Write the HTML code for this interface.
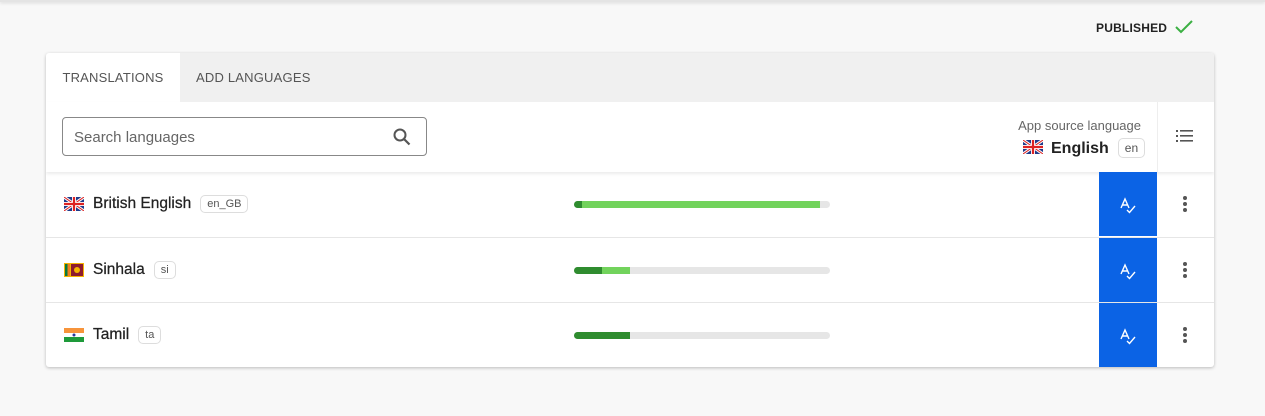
<!DOCTYPE html>
<html><head><style>
*{box-sizing:border-box;margin:0;padding:0}
body{width:1265px;height:416px;background:#f8f8f8;font-family:"Liberation Sans",Arial,sans-serif;position:relative;overflow:hidden;color:#222}
.top{position:absolute;left:0;top:0;width:1265px;height:2px;background:#e4e4e4;box-shadow:0 1px 3px rgba(0,0,0,.15)}
.pub{position:absolute;left:1096px;top:19px;font-size:12px;font-weight:bold;color:#222;letter-spacing:.2px}
.card{position:absolute;left:46px;top:53px;width:1168px;height:314px;background:#fff;box-shadow:0 1px 3px rgba(0,0,0,.25);border-radius:3px;overflow:hidden}
.tabs{height:49px;background:#f0f0f0;position:relative}
.tab{position:absolute;top:0;height:49px;line-height:49px;font-size:13px;color:#555;letter-spacing:.2px}
.tb{position:absolute;top:49px;left:0;width:1168px;height:70px;box-shadow:0 2px 3px rgba(0,0,0,.08);background:#fff}
.search{position:absolute;left:16px;top:15px;width:365px;height:39px;border:1px solid #888;border-radius:4px;font-size:15px;color:#666;padding:11px 11px}
.row{position:absolute;left:0;width:1168px;height:65px;border-top:1px solid #e6e6e6}
.name{position:absolute;left:47px;top:23px;font-size:15.5px;color:#222;-webkit-text-stroke:.25px #222}
.code{display:inline-block;border:1px solid #ddd;border-radius:5px;font-size:11px;color:#555;padding:2px 6px;margin-left:9px;vertical-align:1px;-webkit-text-stroke:0}
.flag{position:absolute;left:18px;top:25px;width:20px;height:14px}
.bar{position:absolute;left:528px;top:29px;width:256px;height:7px;border-radius:4px;background:#e6e6e6;overflow:hidden}
.blue{position:absolute;left:1053px;top:0;width:58px;height:64px;background:#0b63e5}
.dots{position:absolute;left:1137px;top:24px;width:4px}
.dots i{display:block;width:4px;height:4px;border-radius:2px;background:#555;margin-bottom:2px}
</style></head><body>
<div class="top"></div>
<div class="pub">PUBLISHED <svg width="20" height="16" viewBox="0 0 20 16" style="vertical-align:-3px;margin-left:3px"><path d="M2 8l5 5L18 2" fill="none" stroke="#3cb043" stroke-width="2"/></svg></div>
<div class="card">
 <div class="tabs">
  <div class="tab" style="left:0;width:134px;background:#fff;text-align:center;border-radius:3px 0 0 0">TRANSLATIONS</div>
  <div class="tab" style="left:150px">ADD LANGUAGES</div>
 </div>
 <div class="tb">
  <div class="search">Search languages
   <svg style="position:absolute;right:14px;top:9px" width="20" height="20" viewBox="0 0 20 20"><circle cx="8" cy="8" r="5.5" fill="none" stroke="#555" stroke-width="2"/><path d="M12 12l5.5 5.5" stroke="#555" stroke-width="2.2"/></svg>
  </div>
  <div style="position:absolute;right:73px;top:16px;font-size:13px;color:#666">App source language</div>
  <div style="position:absolute;left:977px;top:36px;font-size:16px;font-weight:bold">
   <svg width="20" height="14" viewBox="0 0 20 14" style="vertical-align:-1px;margin-right:8px"><rect width="20" height="14" fill="#1f3a8a"/><path d="M0 0L20 14M20 0L0 14" stroke="#fff" stroke-width="3"/><path d="M0 0L20 14M20 0L0 14" stroke="#d22" stroke-width="1"/><path d="M10 0v14M0 7h20" stroke="#fff" stroke-width="4"/><path d="M10 0v14M0 7h20" stroke="#d22" stroke-width="2.2"/></svg>English<span class="code" style="font-weight:normal;font-size:12px">en</span>
  </div>
  <div style="position:absolute;left:1111px;top:0;width:1px;height:70px;background:#eee"></div>
  <svg style="position:absolute;left:1130px;top:27px" width="18" height="14" viewBox="0 0 18 14"><g fill="#555"><rect x="0" y="1" width="2" height="2"/><rect x="0" y="6" width="2" height="2"/><rect x="0" y="11" width="2" height="2"/><rect x="4" y="1" width="13" height="1.6"/><rect x="4" y="6" width="13" height="1.6"/><rect x="4" y="11" width="13" height="1.6"/></g></svg>
 </div>
 <div class="row" style="top:119px;border-top:none">
  <svg class="flag" viewBox="0 0 20 14"><rect width="20" height="14" fill="#1f3a8a"/><path d="M0 0L20 14M20 0L0 14" stroke="#fff" stroke-width="3"/><path d="M0 0L20 14M20 0L0 14" stroke="#d22" stroke-width="1"/><path d="M10 0v14M0 7h20" stroke="#fff" stroke-width="4"/><path d="M10 0v14M0 7h20" stroke="#d22" stroke-width="2.2"/></svg>
  <div class="name">British English<span class="code">en_GB</span></div>
  <div class="bar"><div style="position:absolute;left:0;width:8px;height:7px;background:#2f8c2f"></div><div style="position:absolute;left:8px;width:238px;height:7px;background:#72d35c"></div></div>
  <div class="blue"><svg style="position:absolute;left:20px;top:24px" width="18" height="18" viewBox="0 0 18 18"><path d="M2 12L6 3l4 9M3.5 9h5M8 14l2.5 2.5L16 10" fill="none" stroke="#fff" stroke-width="1.4"/></svg></div>
  <div class="dots"><i></i><i></i><i></i></div>
 </div>
 <div class="row" style="top:184px">
  <svg class="flag" viewBox="0 0 20 14"><rect width="20" height="14" fill="#f5b301"/><rect x="1" y="1" width="2.5" height="12" fill="#0a7a3a"/><rect x="3.5" y="1" width="2.5" height="12" fill="#f07f1e"/><rect x="7" y="1" width="12" height="12" fill="#8d1b2e"/><circle cx="13" cy="7" r="3" fill="#f5b301"/></svg>
  <div class="name">Sinhala<span class="code">si</span></div>
  <div class="bar"><div style="position:absolute;left:0;width:28px;height:7px;background:#2f8c2f"></div><div style="position:absolute;left:28px;width:28px;height:7px;background:#72d35c"></div></div>
  <div class="blue"><svg style="position:absolute;left:20px;top:24px" width="18" height="18" viewBox="0 0 18 18"><path d="M2 12L6 3l4 9M3.5 9h5M8 14l2.5 2.5L16 10" fill="none" stroke="#fff" stroke-width="1.4"/></svg></div>
  <div class="dots"><i></i><i></i><i></i></div>
 </div>
 <div class="row" style="top:249px">
  <svg class="flag" viewBox="0 0 20 14"><rect width="20" height="5" fill="#f7943b"/><rect y="5" width="20" height="4" fill="#fff"/><rect y="9" width="20" height="5" fill="#1e9a3a"/><circle cx="10" cy="7" r="1.5" fill="#2b3a9a"/></svg>
  <div class="name">Tamil<span class="code">ta</span></div>
  <div class="bar"><div style="position:absolute;left:0;width:56px;height:7px;background:#2f8c2f"></div></div>
  <div class="blue"><svg style="position:absolute;left:20px;top:24px" width="18" height="18" viewBox="0 0 18 18"><path d="M2 12L6 3l4 9M3.5 9h5M8 14l2.5 2.5L16 10" fill="none" stroke="#fff" stroke-width="1.4"/></svg></div>
  <div class="dots"><i></i><i></i><i></i></div>
 </div>
</div>
</body></html>
